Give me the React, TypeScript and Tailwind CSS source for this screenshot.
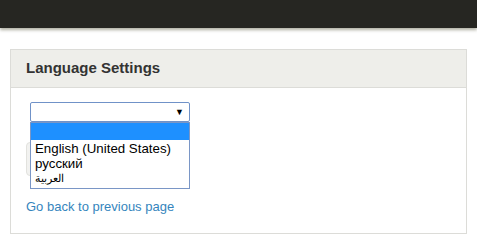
import React from "react";

export default function App() {
  return (
    <div className="w-[477px] h-[242px] bg-white overflow-hidden" style={{ fontFamily: "'Liberation Sans', Arial, sans-serif" }}>
      <div className="h-[28px] bg-[#262622] shadow-[0_2px_3px_rgba(120,120,100,0.6)]" />
      <div className="mt-[21px] ml-[10px] w-[457px] border border-[#dcdcd8]">
        <div className="h-[38px] bg-[#eeeeea] border-b border-[#dcdcd8] flex items-center pl-[15px]">
          <span className="text-[15px] font-bold text-[#333333]">Language Settings</span>
        </div>
        <div className="pt-[14px] pl-[15px] pb-[20px] relative">
          <div className="ml-[4px] w-[160px] h-[20px] border border-[#7092c8] bg-white flex items-center justify-end pr-[5px] rounded-[2px]">
            <span className="text-[9px] leading-none text-black">▼</span>
          </div>
          <div className="mt-[20px] w-[60px] h-[34px] rounded-[4px] bg-[#f2f2f0] border border-[#e2e2de]" />
          <div className="mt-[24px] text-[13px] text-[#3585bd] leading-none">Go back to previous page</div>
          <div className="absolute left-[19px] top-[34px] w-[160px] h-[67px] bg-white border border-[#7a96c6] text-[13px] leading-[15px] text-black">
            <div className="h-[17px] bg-[#1e90ff]" />
            <div className="pl-[4px] pt-[1px] text-[13.3px]">English (United States)</div>
            <div className="pl-[4px] text-[13.3px]">русский</div>
            <div className="pl-[4px] text-[11px] leading-[14px]">العربية</div>
          </div>
        </div>
      </div>
    </div>
  );
}
